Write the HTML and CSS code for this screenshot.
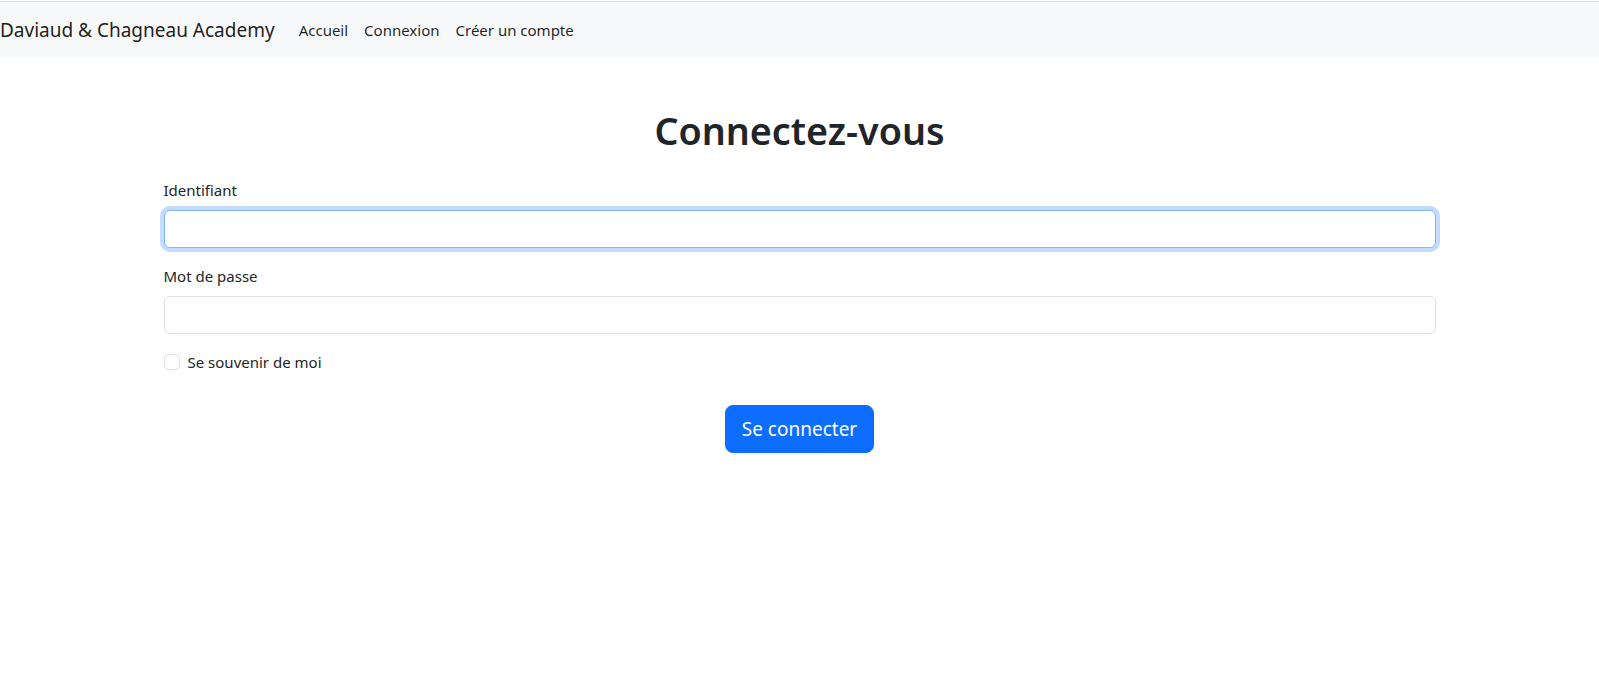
FILE: index.html
```html
<!DOCTYPE html>
<html lang="fr">
<head>
<meta charset="utf-8">
<title>Connexion - Daviaud &amp; Chagneau Academy</title>
<link rel="stylesheet" href="styles.css">
</head>
<body>
<nav class="navbar">
  <a class="brand" href="#">Daviaud &amp; Chagneau Academy</a>
  <ul class="nav-links">
    <li><a class="nav-link" href="#">Accueil</a></li>
    <li><a class="nav-link" href="#">Connexion</a></li>
    <li><a class="nav-link" href="#">Créer un compte</a></li>
  </ul>
</nav>
<main class="container">
  <h1 class="title">Connectez-vous</h1>
  <form class="login-form">
    <div class="field">
      <label class="field-label" for="username">Identifiant</label>
      <input class="field-input is-focused" id="username" type="text">
    </div>
    <div class="field">
      <label class="field-label" for="password">Mot de passe</label>
      <input class="field-input" id="password" type="password">
    </div>
    <div class="check-row">
      <input class="check-input" id="remember" type="checkbox">
      <label class="check-label" for="remember">Se souvenir de moi</label>
    </div>
    <div class="actions">
      <button class="btn-primary" type="button">Se connecter</button>
    </div>
  </form>
</main>
</body>
</html>
```
FILE: styles.css
```css
* { box-sizing: border-box; }

html, body {
  margin: 0;
  padding: 0;
  background: #fff;
}

body {
  font-family: "Noto Sans", "Open Sans", sans-serif;
  font-size: 16px;
  line-height: 24px;
  color: #212529;
}

.navbar {
  margin-top: 1px;
  border-top: 1px solid #dee2e6;
  height: 56px;
  background: #f8f9fa;
  display: flex;
  align-items: center;
}

.brand {
  font-size: 19px;
  line-height: 30px;
  color: rgba(0, 0, 0, 0.9);
  text-decoration: none;
  margin-right: 16px;
  white-space: nowrap;
}

.nav-links {
  list-style: none;
  margin: 0;
  padding: 0;
  display: flex;
}

.nav-link {
  display: block;
  padding: 8px;
  font-size: 15px;
  color: rgba(0, 0, 0, 0.88);
  text-decoration: none;
}

.container {
  max-width: 1320px;
  margin: 0 auto;
  padding: 0 12px;
}

.title {
  margin: 50px 0 23px;
  text-align: center;
  font-size: 37.7px;
  line-height: 48px;
  font-weight: 600;
  color: #212529;
}

.login-form {
  padding: 0 12px;
}

.field {
  margin-bottom: 16px;
}

.field-label {
  display: block;
  margin-bottom: 8px;
  font-size: 15px;
}

.field-input {
  display: block;
  width: 100%;
  height: 38px;
  padding: 6px 12px;
  font: inherit;
  color: #212529;
  background: #fff;
  border: 1px solid #dee2e6;
  border-radius: 6px;
  outline: none;
}

.field-input.is-focused {
  border-color: #86b7fe;
  box-shadow: 0 0 0 4px rgba(13, 110, 253, 0.25);
}

.check-row {
  display: flex;
  align-items: flex-start;
  min-height: 24px;
  margin-bottom: 0;
}

.check-input {
  appearance: none;
  -webkit-appearance: none;
  width: 16px;
  height: 16px;
  margin: 4px 8px 0 0;
  border: 1px solid #dee2e6;
  border-radius: 4px;
  background: #fff;
  flex: none;
}

.check-label {
  font-size: 15px;
}

.actions {
  margin-top: 31px;
  display: flex;
  justify-content: center;
}

.btn-primary {
  height: 48px;
  padding: 8px 16px;
  font-family: inherit;
  font-size: 19px;
  line-height: 30px;
  color: #fff;
  background: #0d6efd;
  border: 1px solid #0d6efd;
  border-radius: 8px;
  cursor: pointer;
}
```
